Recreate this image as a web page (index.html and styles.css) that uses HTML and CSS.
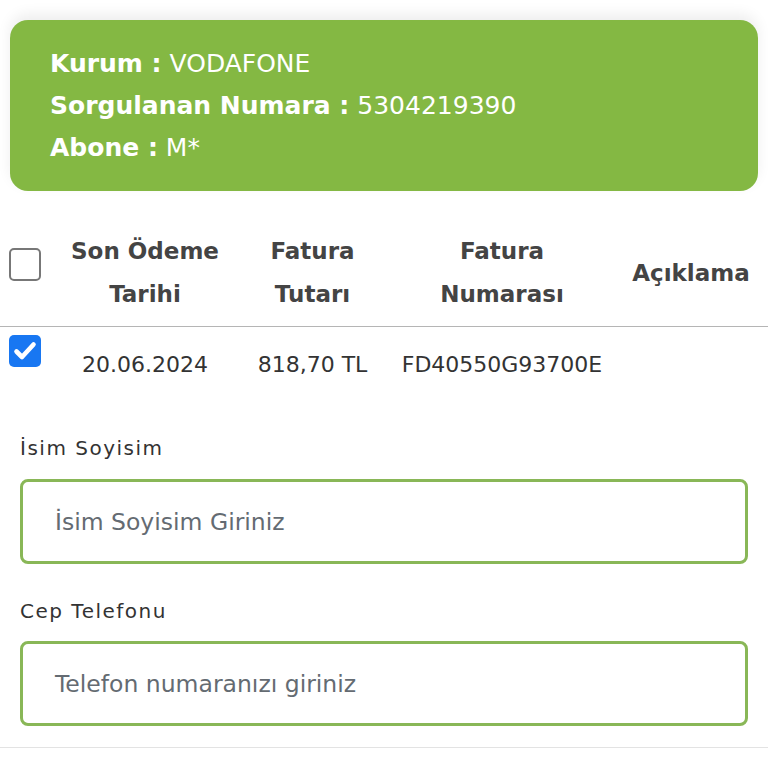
FILE: index.html
```html
<!DOCTYPE html>
<html lang="tr">
<head>
<meta charset="utf-8">
<title>Fatura</title>
<link rel="stylesheet" href="styles.css">
</head>
<body>
<div class="page">
  <div class="card">
    <div class="line"><span class="key">Kurum :</span> <span class="val">VODAFONE</span></div>
    <div class="line"><span class="key">Sorgulanan Numara :</span> <span class="val">5304219390</span></div>
    <div class="line"><span class="key">Abone :</span> <span class="val">M*</span></div>
  </div>

  <div class="table">
    <div class="row head">
      <div class="cell check"><span class="box"></span></div>
      <div class="cell">Son Ödeme<br>Tarihi</div>
      <div class="cell">Fatura<br>Tutarı</div>
      <div class="cell">Fatura<br>Numarası</div>
      <div class="cell">Açıklama</div>
    </div>
    <div class="row body">
      <div class="cell check">
        <span class="box checked">
          <svg viewBox="0 0 32 32" width="32" height="32"><path d="M7.5 16.5 L13 22 L24.5 9.5" fill="none" stroke="#fff" stroke-width="4.6" stroke-linecap="round" stroke-linejoin="round"/></svg>
        </span>
      </div>
      <div class="cell">20.06.2024</div>
      <div class="cell">818,70 TL</div>
      <div class="cell">FD40550G93700E</div>
      <div class="cell"></div>
    </div>
  </div>

  <div class="form">
    <label class="label">İsim Soyisim</label>
    <div class="input"><span class="ph">İsim Soyisim Giriniz</span></div>
    <label class="label second">Cep Telefonu</label>
    <div class="input"><span class="ph">Telefon numaranızı giriniz</span></div>
  </div>
  <div class="rule"></div>
</div>
</body>
</html>
```

FILE: styles.css
```css
html, body {
  margin: 0;
  padding: 0;
  background: #fff;
}
body {
  font-family: "DejaVu Sans", "Open Sans", sans-serif;
  color: #333;
}
.page {
  padding-top: 20px;
}
.card {
  margin: 0 10px;
  height: 171px;
  box-sizing: border-box;
  padding: 23px 40px 0 40px;
  background: #84b843;
  border-radius: 18px;
  box-shadow: 0 -6px 14px rgba(0,0,0,0.07);
  color: #fff;
  font-size: 25px;
  line-height: 42px;
}
.key { font-weight: 700; }
.val { font-weight: 400; }

.table {
  margin-top: 39px;
}
.row {
  display: grid;
  grid-template-columns: 55px 180px 155px 224px 1fr;
}
.cell {
  text-align: center;
  font-size: 22px;
  line-height: 43px;
}
.head {
  padding-bottom: 10px;
  border-bottom: 1.5px solid #b5b5b5;
  color: #444;
  font-weight: 700;
  align-items: center;
}
.head .cell {
  font-size: 23px;
}
.head .check {
  align-self: start;
  padding-top: 18px;
}
.check {
  display: flex;
  justify-content: flex-start;
  padding-left: 9px;
}
.box {
  display: block;
  width: 32px;
  height: 33px;
  box-sizing: border-box;
  border: 2px solid #777;
  border-radius: 5px;
  background: #fff;
}
.box.checked {
  border: none;
  background: #1877f2;
  height: 32px;
}
.box svg { display: block; }
.body {
  padding-top: 8px;
  color: #333;
}
.body .cell:not(.check) {
  padding-top: 8px;
}
.body .check { line-height: 0; }

.form {
  padding: 48px 20px 0 20px;
}
.label {
  display: block;
  font-size: 20px;
  line-height: 28px;
  letter-spacing: 1.5px;
  color: #333;
  margin-bottom: 17px;
}
.label.second {
  margin-top: 33px;
  margin-bottom: 16px;
}
.input {
  height: 85px;
  box-sizing: border-box;
  border: 3px solid #89b757;
  border-radius: 8px;
  display: flex;
  align-items: center;
  padding-left: 32px;
}
.ph {
  font-size: 23.5px;
  color: #646b72;
}
.rule {
  margin-top: 21px;
  border-top: 1px solid #e3e3e3;
}
```
